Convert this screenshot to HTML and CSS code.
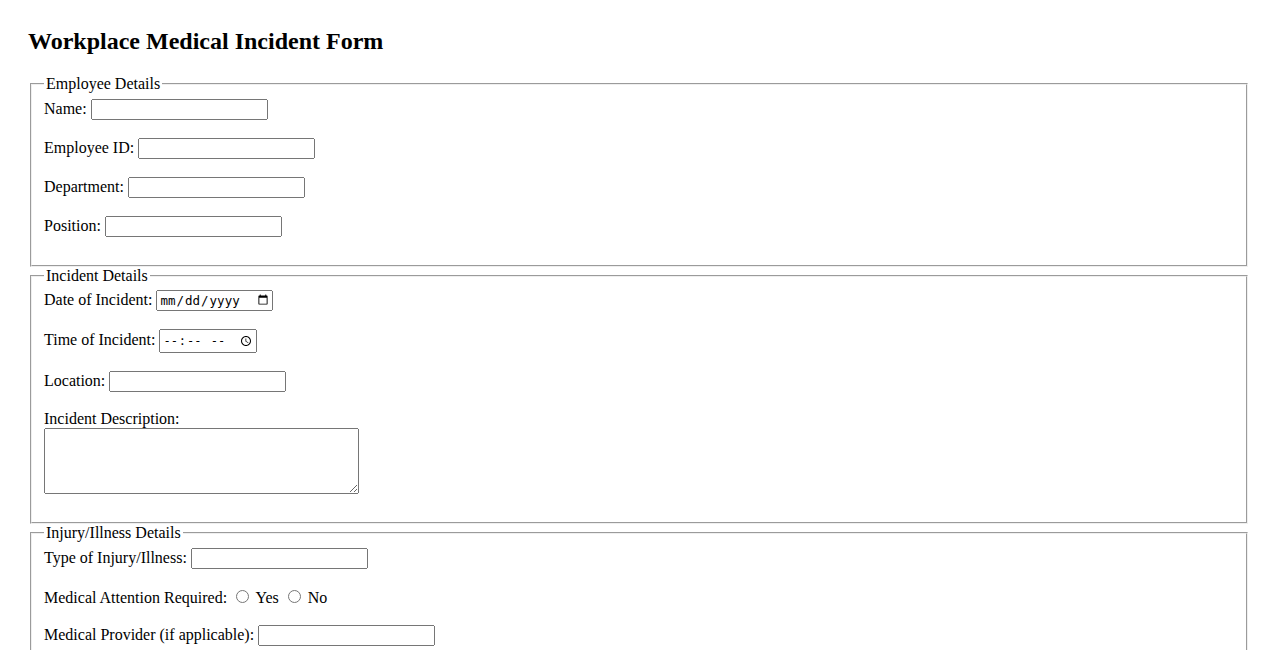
FILE: index.html
```html
<!DOCTYPE html>
<html lang="en">
<head>
<meta charset="utf-8">
<title>Workplace Medical Incident Form</title>
<link rel="stylesheet" href="styles.css">
</head>
<body>
<h2 class="title">Workplace Medical Incident Form</h2>
<form>
<fieldset>
<legend>Employee Details</legend>
<div class="row"><label for="name">Name:</label> <input class="text" type="text" id="name"></div>
<div class="row"><label for="eid">Employee ID:</label> <input class="text" type="text" id="eid"></div>
<div class="row"><label for="dept">Department:</label> <input class="text" type="text" id="dept"></div>
<div class="row"><label for="pos">Position:</label> <input class="text" type="text" id="pos"></div>
</fieldset>
<fieldset>
<legend>Incident Details</legend>
<div class="row"><label for="date">Date of Incident:</label> <input class="date" type="date" id="date"></div>
<div class="row"><label for="time">Time of Incident:</label> <input class="time" type="time" id="time"></div>
<div class="row"><label for="loc">Location:</label> <input class="text" type="text" id="loc"></div>
<div class="row"><label for="desc">Incident Description:</label><textarea class="area" id="desc" rows="4"></textarea></div>
</fieldset>
<fieldset>
<legend>Injury/Illness Details</legend>
<div class="row"><label for="type">Type of Injury/Illness:</label> <input class="text" type="text" id="type"></div>
<div class="row"><label>Medical Attention Required:</label> <input type="radio" name="med" id="yes"> <label for="yes">Yes</label> <input type="radio" name="med" id="no"> <label for="no">No</label></div>
<div class="row"><label for="prov">Medical Provider (if applicable):</label> <input class="text" type="text" id="prov"></div>
</fieldset>
</form>
</body>
</html>
```
FILE: styles.css
```css
body {
  margin: 8px;
  padding: 20px;
  font-family: "Liberation Serif", "Times New Roman", serif;
}
.title {
  margin-top: 0;
}
.row {
  margin-bottom: 18px;
}
.text {
  box-sizing: border-box;
  width: 177px;
  height: 21px;
}
.date {
  box-sizing: border-box;
  width: 117px;
  height: 21px;
  font-size: 12.5px;
}
.time {
  box-sizing: border-box;
  width: 98px;
  height: 24px;
  font-size: 12px;
}
.area {
  display: block;
  box-sizing: border-box;
  width: 315px;
  height: 66px;
}
```
